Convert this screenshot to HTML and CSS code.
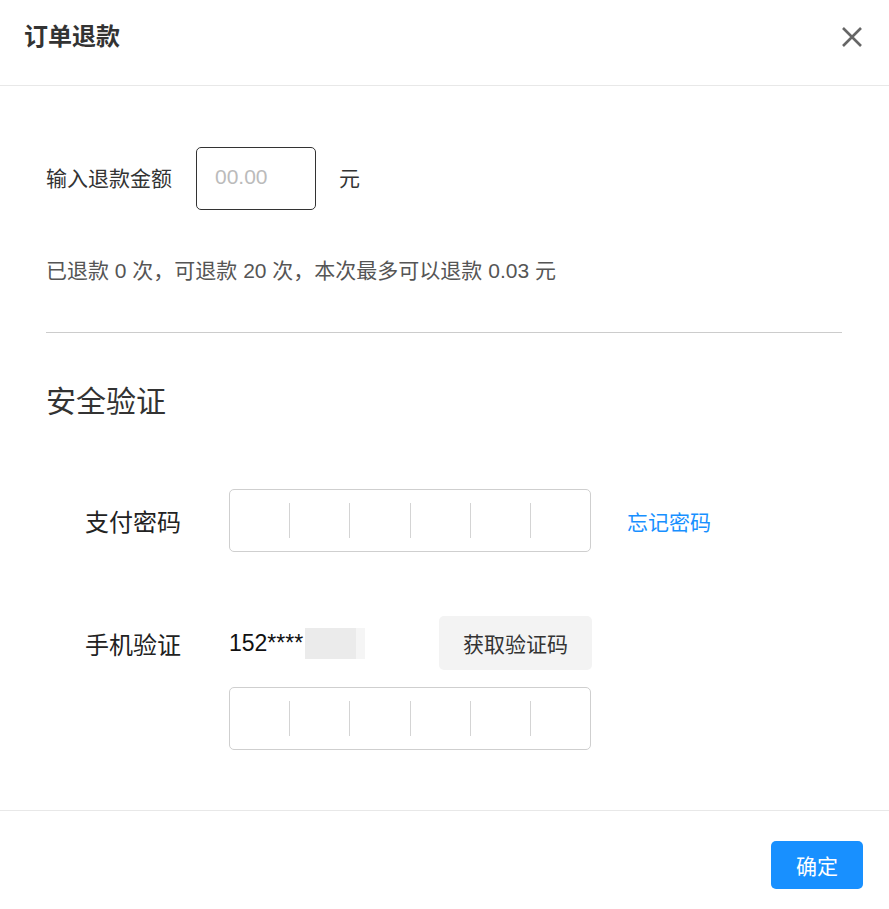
FILE: index.html
```html
<!DOCTYPE html>
<html lang="zh-CN">
<head>
<meta charset="utf-8">
<title>订单退款</title>
<link rel="stylesheet" href="styles.css">
</head>
<body>
<div class="dialog">
  <div class="header">
    <div class="title">订单退款</div>
    <button class="close" aria-label="关闭">
      <svg width="24" height="24" viewBox="0 0 24 24"><path d="M3 3 L21 21 M21 3 L3 21" stroke="#666" stroke-width="2.6" fill="none"/></svg>
    </button>
  </div>
  <div class="body">
    <div class="amount-row">
      <span class="amount-label">输入退款金额</span>
      <div class="amount-input">00.00</div>
      <span class="unit">元</span>
    </div>
    <div class="info">已退款 0 次，可退款 20 次，本次最多可以退款 0.03 元</div>
    <div class="divider"></div>
    <div class="section-title">安全验证</div>
    <div class="form-row pay-row">
      <span class="form-label">支付密码</span>
      <div class="code-box">
        <span class="cell"></span><span class="cell"></span><span class="cell"></span><span class="cell"></span><span class="cell"></span><span class="cell"></span>
      </div>
      <a class="forgot">忘记密码</a>
    </div>
    <div class="form-row phone-row">
      <span class="form-label">手机验证</span>
      <span class="phone">152****<span class="mask"></span></span>
      <button class="get-code">获取验证码</button>
    </div>
    <div class="form-row code-row">
      <div class="code-box">
        <span class="cell"></span><span class="cell"></span><span class="cell"></span><span class="cell"></span><span class="cell"></span><span class="cell"></span>
      </div>
    </div>
  </div>
  <div class="footer">
    <button class="confirm">确定</button>
  </div>
</div>
</body>
</html>
```
FILE: styles.css
```css
* { box-sizing: border-box; }
html, body { margin: 0; padding: 0; background: #fff; }
body {
  font-family: "Liberation Sans", "Noto Sans CJK SC", sans-serif;
  color: #333;
}
.dialog { width: 889px; height: 909px; }
.header {
  height: 86px;
  border-bottom: 1px solid #e8e8e8;
  padding: 22px 25px 0 24px;
  display: flex;
  justify-content: space-between;
  align-items: flex-start;
}
.title {
  font-size: 24px;
  font-weight: bold;
  line-height: 30px;
  color: #333;
}
.close {
  border: none;
  background: none;
  padding: 0;
  width: 24px;
  height: 24px;
  margin-top: 3px;
  cursor: pointer;
}
.close svg { display: block; }
.body { padding: 61px 47px 0 46px; }
.amount-row {
  display: flex;
  align-items: center;
  height: 63px;
}
.amount-label { font-size: 21px; color: #333; margin-bottom: 3px; }
.amount-input {
  margin-left: 24px;
  width: 120px;
  height: 63px;
  border: 1px solid #333;
  border-radius: 5px;
  padding-left: 18px;
  font-size: 21px;
  color: #bbb;
  line-height: 58px;
}
.unit { margin-left: 23px; font-size: 21px; color: #333; margin-bottom: 3px; }
.info {
  margin-top: 46px;
  font-size: 21px;
  line-height: 30px;
  color: #555;
}
.divider {
  margin-top: 46px;
  height: 1px;
  background: #ccc;
}
.section-title {
  margin-top: 49px;
  font-size: 30px;
  line-height: 40px;
  color: #333;
}
.form-row {
  display: flex;
  align-items: center;
  padding-left: 39px;
}
.pay-row { margin-top: 67px; }
.form-label {
  width: 144px;
  font-size: 24px;
  color: #222;
}
.code-box {
  width: 362px;
  height: 63px;
  border: 1px solid #cfcfcf;
  border-radius: 5px;
  display: flex;
  align-items: center;
}
.cell {
  flex: 1;
  height: 35px;
  border-left: 1px solid #d4d4d4;
}
.cell:first-child { border-left: none; }
.forgot {
  margin-left: 36px;
  font-size: 21px;
  color: #1890ff;
  cursor: pointer;
}
.phone-row { margin-top: 64px; height: 54px; }
.phone {
  display: flex;
  align-items: center;
  width: 210px;
  font-size: 23px;
  color: #111;
}
.mask {
  display: inline-block;
  width: 60px;
  height: 31px;
  margin-left: 2px;
  background: linear-gradient(to right, #ebebeb 0, #ebebeb 51px, #f5f5f5 51px);
}
.get-code {
  width: 153px;
  height: 54px;
  border: none;
  border-radius: 5px;
  background: #f3f3f3;
  font-family: inherit;
  font-size: 21px;
  color: #333;
}
.code-row { margin-top: 17px; padding-left: 183px; }
.footer {
  margin-top: 60px;
  border-top: 1px solid #e8e8e8;
  padding: 30px 26px 0 0;
  display: flex;
  justify-content: flex-end;
}
.confirm {
  width: 92px;
  height: 48px;
  border: none;
  border-radius: 5px;
  background: #1890ff;
  color: #fff;
  font-family: inherit;
  font-size: 21px;
}
```
